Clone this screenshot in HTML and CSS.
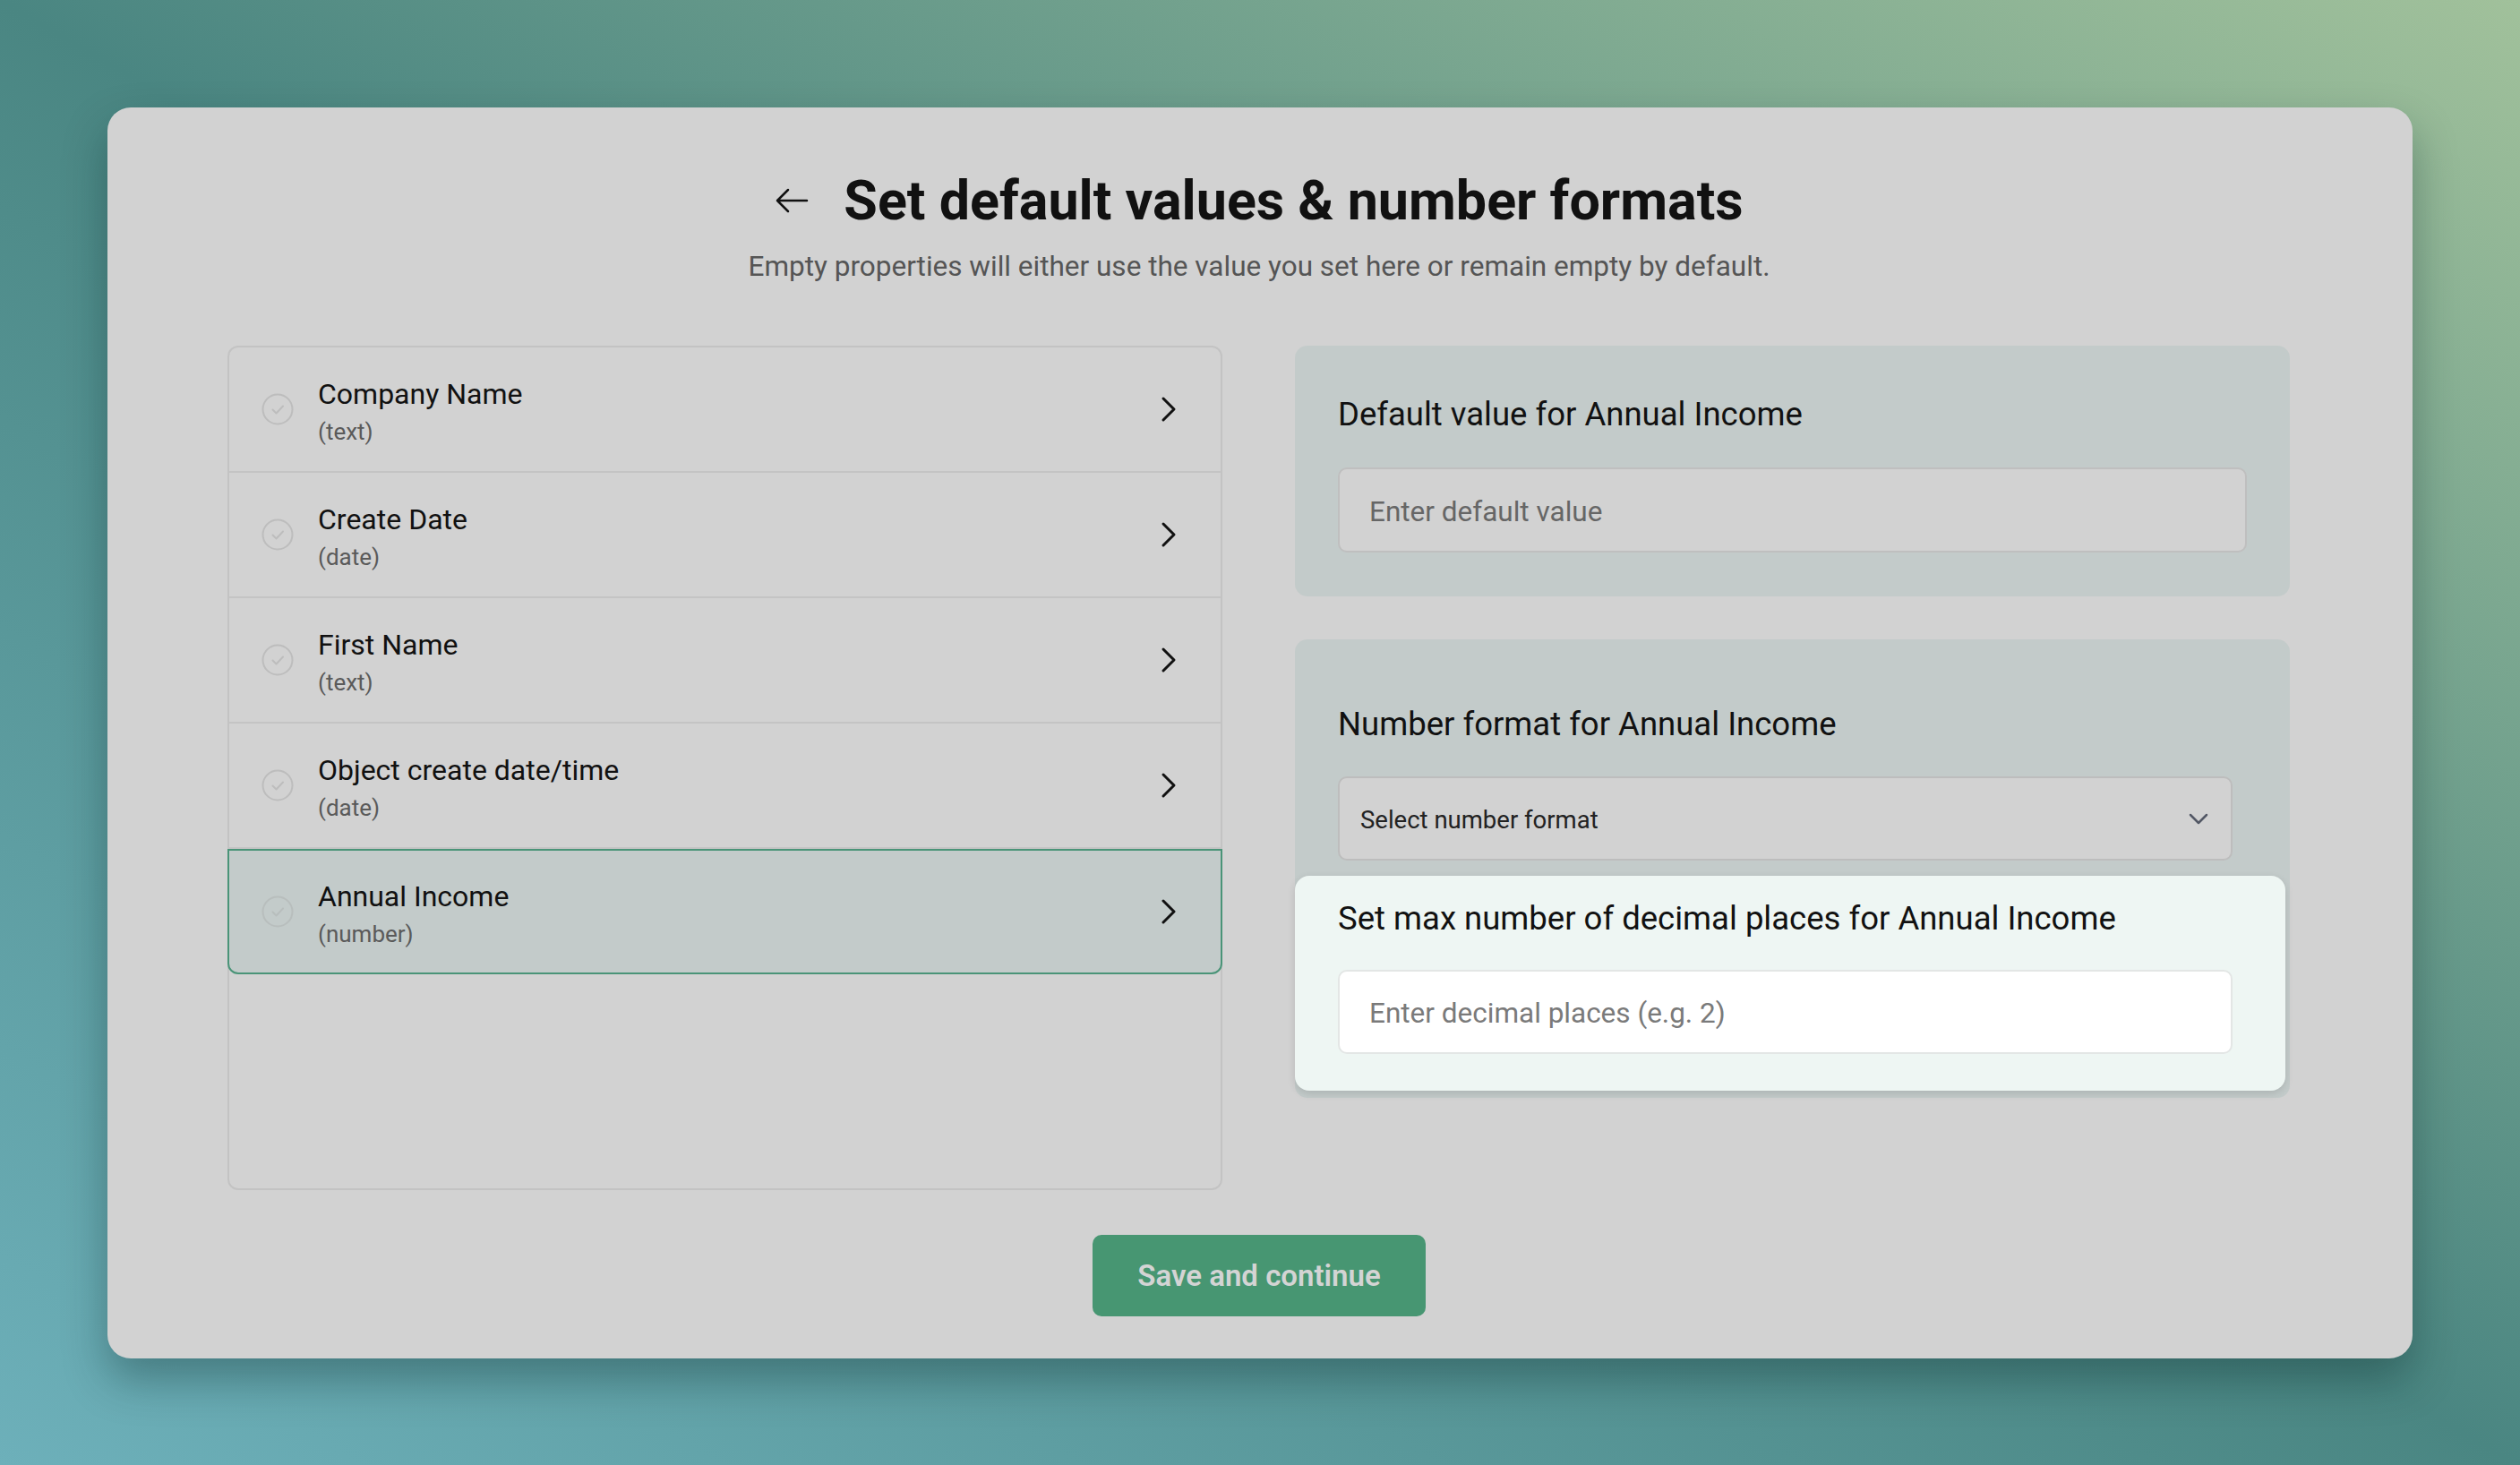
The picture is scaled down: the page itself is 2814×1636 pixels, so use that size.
FILE: index.html
```html
<!DOCTYPE html>
<html lang="en">
<head>
<meta charset="utf-8">
<title>Set default values &amp; number formats</title>
<link rel="stylesheet" href="styles.css">
</head>
<body>
<main class="card">
  <header class="header">
    <div class="title-row">
      <svg class="back" width="38" height="30" viewBox="0 0 38 30" aria-hidden="true"><path d="M36 15H3M15 3L3 15l12 12" fill="none" stroke="#111" stroke-width="2.5" stroke-linecap="round" stroke-linejoin="round"/></svg>
      <h1 class="title">Set default values &amp; number formats</h1>
    </div>
    <p class="subtitle">Empty properties will either use the value you set here or remain empty by default.</p>
  </header>

  <section class="columns">
    <div class="list">
      <div class="row">
        <svg class="check" width="36" height="36" viewBox="0 0 36 36" aria-hidden="true"><circle cx="18" cy="18" r="16.5" fill="none" stroke="#bdbdbd" stroke-width="2"/><path d="M12.5 18.5l4 4 7.5-8" fill="none" stroke="#bdbdbd" stroke-width="2" stroke-linecap="round" stroke-linejoin="round"/></svg>
        <div class="row-text"><div class="row-name">Company Name</div><div class="row-type">(text)</div></div>
        <svg class="chev" width="20" height="30" viewBox="0 0 20 30" aria-hidden="true"><path d="M4 3l12 12L4 27" fill="none" stroke="#111" stroke-width="3" stroke-linecap="round" stroke-linejoin="round"/></svg>
      </div>
      <div class="row">
        <svg class="check" width="36" height="36" viewBox="0 0 36 36" aria-hidden="true"><circle cx="18" cy="18" r="16.5" fill="none" stroke="#bdbdbd" stroke-width="2"/><path d="M12.5 18.5l4 4 7.5-8" fill="none" stroke="#bdbdbd" stroke-width="2" stroke-linecap="round" stroke-linejoin="round"/></svg>
        <div class="row-text"><div class="row-name">Create Date</div><div class="row-type">(date)</div></div>
        <svg class="chev" width="20" height="30" viewBox="0 0 20 30" aria-hidden="true"><path d="M4 3l12 12L4 27" fill="none" stroke="#111" stroke-width="3" stroke-linecap="round" stroke-linejoin="round"/></svg>
      </div>
      <div class="row">
        <svg class="check" width="36" height="36" viewBox="0 0 36 36" aria-hidden="true"><circle cx="18" cy="18" r="16.5" fill="none" stroke="#bdbdbd" stroke-width="2"/><path d="M12.5 18.5l4 4 7.5-8" fill="none" stroke="#bdbdbd" stroke-width="2" stroke-linecap="round" stroke-linejoin="round"/></svg>
        <div class="row-text"><div class="row-name">First Name</div><div class="row-type">(text)</div></div>
        <svg class="chev" width="20" height="30" viewBox="0 0 20 30" aria-hidden="true"><path d="M4 3l12 12L4 27" fill="none" stroke="#111" stroke-width="3" stroke-linecap="round" stroke-linejoin="round"/></svg>
      </div>
      <div class="row">
        <svg class="check" width="36" height="36" viewBox="0 0 36 36" aria-hidden="true"><circle cx="18" cy="18" r="16.5" fill="none" stroke="#bdbdbd" stroke-width="2"/><path d="M12.5 18.5l4 4 7.5-8" fill="none" stroke="#bdbdbd" stroke-width="2" stroke-linecap="round" stroke-linejoin="round"/></svg>
        <div class="row-text"><div class="row-name">Object create date/time</div><div class="row-type">(date)</div></div>
        <svg class="chev" width="20" height="30" viewBox="0 0 20 30" aria-hidden="true"><path d="M4 3l12 12L4 27" fill="none" stroke="#111" stroke-width="3" stroke-linecap="round" stroke-linejoin="round"/></svg>
      </div>
      <div class="row row-selected">
        <svg class="check" width="36" height="36" viewBox="0 0 36 36" aria-hidden="true"><circle cx="18" cy="18" r="16.5" fill="none" stroke="#b8bebd" stroke-width="2"/><path d="M12.5 18.5l4 4 7.5-8" fill="none" stroke="#b8bebd" stroke-width="2" stroke-linecap="round" stroke-linejoin="round"/></svg>
        <div class="row-text"><div class="row-name">Annual Income</div><div class="row-type">(number)</div></div>
        <svg class="chev" width="20" height="30" viewBox="0 0 20 30" aria-hidden="true"><path d="M4 3l12 12L4 27" fill="none" stroke="#111" stroke-width="3" stroke-linecap="round" stroke-linejoin="round"/></svg>
      </div>
    </div>

    <div class="side">
      <div class="panel panel-default">
        <label class="label" for="defval">Default value for Annual Income</label>
        <input class="field" id="defval" type="text" placeholder="Enter default value">
      </div>
      <div class="panel panel-format">
        <div class="label">Number format for Annual Income</div>
        <div class="select">
          <span class="select-text">Select number format</span>
          <svg class="select-chev" width="24" height="16" viewBox="0 0 24 16" aria-hidden="true"><path d="M3 3l9 9 9-9" fill="none" stroke="#535865" stroke-width="2.5" stroke-linecap="round" stroke-linejoin="round"/></svg>
        </div>
        <div class="decimal">
          <label class="label" for="decplaces">Set max number of decimal places for Annual Income</label>
          <input class="field field-white" id="decplaces" type="text" placeholder="Enter decimal places (e.g. 2)">
        </div>
      </div>
    </div>
  </section>

  <button class="save" type="button">Save and continue</button>
</main>
</body>
</html>
```

FILE: styles.css
```css
* { box-sizing: border-box; }

html, body { margin: 0; }

body {
  min-height: 1636px;
  padding: 120px;
  font-family: "Roboto", "Liberation Sans", sans-serif;
  color: #111;
  background: linear-gradient(to top right, #6db0ba 0%, #4a8682 50%, #a1c19b 100%);
}

.card {
  display: flex;
  flex-direction: column;
  align-items: center;
  width: 100%;
  padding: 68px 136px 47px 134px;
  background: #d2d2d2;
  border-radius: 26px;
  box-shadow: 0 24px 48px rgba(10, 40, 40, 0.35);
}

.header { display: flex; flex-direction: column; align-items: center; }

.title-row { display: flex; align-items: center; gap: 39px; }

.back { display: block; }

.title {
  margin: 0;
  font-size: 61px;
  line-height: 72px;
  font-weight: 700;
  color: #111;
}

.subtitle {
  margin: 18px 0 0;
  font-size: 31.5px;
  line-height: 40px;
  color: #555;
}

.columns {
  display: grid;
  grid-template-columns: 1111px 1111px;
  gap: 81px;
  width: 100%;
  margin-top: 68px;
}

.list {
  height: 943px;
  border: 2px solid #c3c3c3;
  border-radius: 12px;
}

.row {
  display: flex;
  align-items: center;
  height: 140px;
  padding: 0 48px 0 36px;
  border-bottom: 2px solid #c4c4c4;
}

.row-selected {
  margin: 0 -2px;
  background: #c3cbca;
  border: 2px solid #4a9478;
  border-radius: 0 0 12px 12px;
}

.check { flex: none; display: block; }

.row-text { margin: 5px 0 0 27px; display: flex; flex-direction: column; }

.row-name { font-size: 32px; line-height: 38px; color: #111; }

.row-type { margin-top: 7px; font-size: 26px; line-height: 32px; color: #5a5a5a; }

.chev { flex: none; display: block; margin-left: auto; }

.side { display: flex; flex-direction: column; gap: 48px; }

.panel {
  background: #c3cbca;
  border-radius: 14px;
}

.panel-default { padding: 55px 48px 49px; }

.panel-format { padding: 73px 64px 8px 48px; }

.label {
  display: block;
  margin-bottom: 37px;
  font-size: 36.5px;
  line-height: 44px;
  color: #111;
}

.panel-format > .label { margin-bottom: 36px; }

.field {
  display: block;
  width: 100%;
  height: 95px;
  padding: 4px 0 0 33px;
  font-family: inherit;
  font-size: 31.5px;
  color: #111;
  background: #d2d2d2;
  border: 2px solid #bfbfbf;
  border-radius: 10px;
  outline: none;
}

.field::placeholder { color: #666; }

.field-white {
  height: 94px;
  padding-top: 2px;
  background: #fff;
  border-color: #e3e6e5;
}

.field-white::placeholder { color: #7a7a7a; }

.select {
  display: flex;
  align-items: center;
  justify-content: space-between;
  height: 94px;
  padding: 2px 24px 0 23px;
  background: #d2d2d2;
  border: 2px solid #bdbdbd;
  border-radius: 10px;
}

.select-text { font-size: 27.5px; color: #222; }

.select-chev { display: block; flex: none; }

.decimal {
  margin: 17px -59px 0 -48px;
  padding: 26px 59px 41px 48px;
  background: #eef6f3;
  border-radius: 16px;
  box-shadow: 0 3px 10px rgba(0, 0, 0, 0.12);
}

.decimal .label { margin-bottom: 35px; }

.save {
  margin-top: 50px;
  width: 372px;
  height: 91px;
  font-family: inherit;
  font-size: 33px;
  font-weight: 600;
  color: #d4d4d4;
  background: #479672;
  border: none;
  border-radius: 10px;
}
```
